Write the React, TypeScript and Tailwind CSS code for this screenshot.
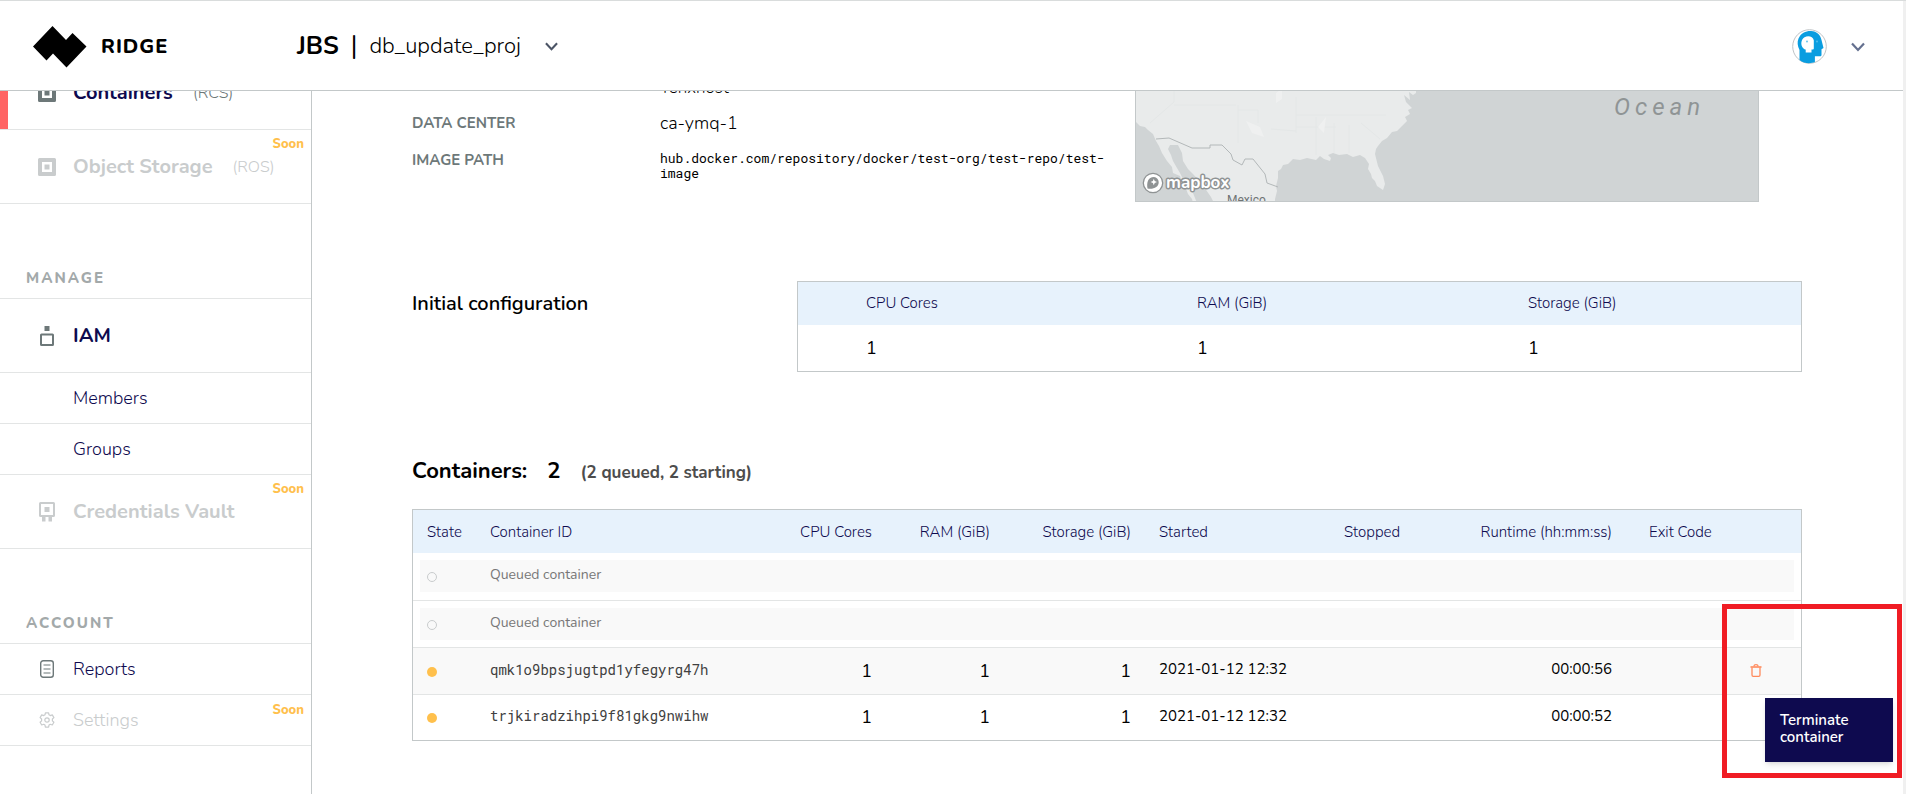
import type { ReactNode } from "react";

function RidgeLogo() {
  return (
    <svg width="54" height="42" viewBox="0 0 54 42" aria-hidden="true">
      <path d="M0 20.500 19.500 0 33 14 39.500 7 53.500 20.500 33.500 41.500 20 27.500 13.500 34.500Z" fill="#000" />
    </svg>
  );
}

function Chevron({ size }: { size: number }) {
  return (
    <svg width={size} height={size} viewBox="0 0 14 14" fill="none" stroke="currentColor" strokeWidth="2.200" aria-hidden="true">
      <path d="M1 3.500 7 10 13 3.500" />
    </svg>
  );
}

function Avatar() {
  return (
    <svg width="35" height="35" viewBox="0 0 35 35" aria-hidden="true">
      <circle cx="17.500" cy="17.500" r="16.800" fill="#fff" stroke="#bfc3c6" />
      <path d="M7.500 31V21C5.500 17 5 13 6.500 9.500 9 4 14 1.800 19 2c6 .3 9.500 4 10.500 9l2 8-2 1.200v5.500c0 1-.6 1.600-1.600 1.600h-5V33c-4 1.800-11 1.800-15.400-2Z" fill="#0a9de0" />
      <path d="M11 19c-2.500-3-2.300-8.500 1.500-10.800 3.500-2 8.500-1 9.300 3v8c0 1-.5 1.300-1.300 1.300h-1V23.500h-5.800V20.500c-1 0-2-.6-2.700-1.500Z" fill="#fff" />
      <circle cx="15" cy="12.500" r="0.900" fill="#5bbfec" />
      <circle cx="25" cy="12.500" r="0.900" fill="#5bbfec" />
    </svg>
  );
}

function ContainerIcon() {
  return (
    <svg width="18" height="18" viewBox="0 0 18 18" aria-hidden="true">
      <path fillRule="evenodd" fill="currentColor" d="M1.500 0h15A1.500 1.500 0 0 1 18 1.500v15a1.500 1.500 0 0 1-1.500 1.500h-15A1.500 1.500 0 0 1 0 16.500v-15A1.500 1.500 0 0 1 1.500 0ZM4 4v10h10V4Z" />
      <path fill="currentColor" d="M6.500 6.500h5v5h-5z" />
    </svg>
  );
}

function IamIcon() {
  return (
    <svg width="14" height="20" viewBox="0 0 14 20" aria-hidden="true">
      <path d="M4.500 0h5v5h-5z" fill="currentColor" />
      <rect x="1" y="8.500" width="12" height="10.500" rx="0.500" fill="none" stroke="currentColor" strokeWidth="2" />
    </svg>
  );
}

function VaultIcon() {
  return (
    <svg width="16" height="20" viewBox="0 0 16 20" aria-hidden="true">
      <rect x="1" y="1" width="14" height="13" rx="0.500" fill="none" stroke="currentColor" strokeWidth="2" />
      <path fill="currentColor" d="M5.500 5h5v5h-5zM3 15h3.500v4.500H3zM9.500 15H13v4.500H9.500z" />
    </svg>
  );
}

function ReportIcon() {
  return (
    <svg width="14" height="18" viewBox="0 0 14 18" fill="none" stroke="currentColor" aria-hidden="true">
      <rect x="0.700" y="0.700" width="12.600" height="16.600" rx="2.500" strokeWidth="1.400" />
      <path d="M3.500 5h7M3.500 9h7M3.500 13h7" strokeWidth="1.200" />
    </svg>
  );
}

function GearIcon() {
  return (
    <svg width="16" height="16" viewBox="0 0 16 16" fill="none" stroke="currentColor" strokeWidth="1.200" strokeLinejoin="round" aria-hidden="true">
      <circle cx="8" cy="8" r="2.200" />
      <path d="M6.400.8h3.200l.4 2 1.300.8 2-.7 1.600 2.700-1.500 1.400v1.900l1.500 1.400-1.600 2.700-2-.7-1.300.8-.4 2H6.400l-.4-2-1.300-.8-2 .7-1.600-2.700 1.500-1.400V7L1.100 5.600l1.600-2.700 2 .7L6 2.800Z" />
    </svg>
  );
}

function TrashIcon() {
  return (
    <svg width="12" height="13" viewBox="0 0 12 13" fill="none" stroke="currentColor" aria-hidden="true">
      <path d="M2 3.500v7.500c0 .8.400 1.300 1.200 1.300h5.600c.8 0 1.200-.5 1.200-1.300V3.500" strokeWidth="1.300" />
      <path d="M.5 3h11" strokeWidth="1.600" />
      <path d="M3.800 2.400C4 1.200 4.800.7 6 .7s2 .5 2.200 1.700" strokeWidth="1.300" />
    </svg>
  );
}

function MapboxMark() {
  return (
    <svg width="22" height="22" viewBox="0 0 22 22" aria-hidden="true">
      <circle cx="11" cy="11" r="9.700" fill="#fff" stroke="#8f9394" strokeWidth="1.300" />
      <path d="M5.500 16.500c-1-6 .5-11.500 6.500-11.500a5 5 0 0 1 4.700 5.200c0 5-5.200 7.300-11.200 6.300Z" fill="#8f9394" />
      <path d="m11.800 6.800.9 2.300 2.300.9-2.300.9-.9 2.300-.9-2.300-2.300-.9 2.300-.9Z" fill="#fff" />
    </svg>
  );
}

type NavItemProps = {
  icon?: ReactNode;
  label: string;
  suffix?: string;
  soon?: boolean;
  tall?: boolean;
  active?: boolean;
};

function NavItem({ icon, label, suffix, soon, tall, active }: NavItemProps) {
  return (
    <li>
      <a
        href="#"
        className={`relative flex items-center border-b border-[#e3e5e5] ${tall ? "h-[74px] text-xl" : "h-[51px] text-lg"} ${soon ? "text-[#c9cccd]" : "text-[#0e0a4f]"}`}
      >
        {active && <span className="absolute inset-y-0 left-0 w-2 bg-[#ff6464]" />}
        <span className={`flex w-[73px] justify-center pl-5 ${soon ? "" : "text-[#6d7879]"}`}>{icon}</span>
        <span className={tall ? "font-bold" : "font-light"}>{label}</span>
        {suffix && <span className={`ml-5 text-base font-light ${soon ? "" : "text-[#6d7879]"}`}>{suffix}</span>}
        {soon && <span className="absolute top-[5px] right-[7px] text-[13px] font-extrabold text-[#ffc04c]">Soon</span>}
      </a>
    </li>
  );
}

function NavTitle({ children }: { children: ReactNode }) {
  return (
    <h2 className="flex h-[95px] items-end border-b border-[#e3e5e5] pb-2 pl-[26px] text-[15px] leading-6 font-extrabold tracking-[2px] text-[#a3a9aa]">
      {children}
    </h2>
  );
}

function Sidebar() {
  return (
    <nav className="w-[312px] shrink-0 overflow-hidden border-r border-[#c3c8c9]">
      <div className="-mt-[35px]">
        <ul>
          <NavItem icon={<ContainerIcon />} label="Containers" suffix="(RCS)" tall active />
          <NavItem icon={<ContainerIcon />} label="Object Storage" suffix="(ROS)" tall soon />
        </ul>
        <NavTitle>MANAGE</NavTitle>
        <ul>
          <NavItem icon={<IamIcon />} label="IAM" tall />
          <NavItem label="Members" />
          <NavItem label="Groups" />
          <NavItem icon={<VaultIcon />} label="Credentials Vault" tall soon />
        </ul>
        <NavTitle>ACCOUNT</NavTitle>
        <ul>
          <NavItem icon={<ReportIcon />} label="Reports" />
          <NavItem icon={<GearIcon />} label="Settings" soon />
        </ul>
      </div>
    </nav>
  );
}

function MapPanel() {
  return (
    <div className="relative h-[146px] w-[624px] shrink-0 overflow-hidden border border-[#c3c8c9] bg-[#d0d4d5]">
      <svg viewBox="0 0 624 146" width="624" height="146" className="block max-w-none" role="img" aria-label="Map of North America">
        <path
          fill="#e9ebeb"
          d="M0 0H280V36L277 38 273 35 274 43 268 38 270 45 276 51 272 53 274 57 269 60 271 64 266 69 261 74 256 75 251 81 246 84 242 89 240 92 239 97 242 109 247 119 249 127 247 133 241 129 239 124 236 121 235 117 232 112 233 107 229 101 224 98 217 100 211 97 203 98 197 96 192 98 195 101 194 104 188 102 184 99 180 103 171 101 164 103 157 102 152 107 147 108 145 112 142 114 142 121 140 129 141 134 139 142V146H78L75 140 66 127 57 117 52 112 47 104 46 96 42 88 34 88 32 92 35 98 37 104 41 111 44 116 47 122 52 129 57 136 61 146H57L56 142 52 137 49 129 46 126 44 119 37 116 36 110 31 104 26 96 23 89 20 84 17 77 12 73 9 70 4 69 0 65Z"
        />
        <path
          fill="none"
          stroke="#e4e7e7"
          d="M38 20V45L14 66M38 48H100M102 48V86M102 53H122V66M160 40V76M160 58H250M180 60V98M198 66V96M213 68V96M160 70H200M135 72 160 74M225 66 244 82"
        />
        <path fill="#eff0f0" d="M110 64l14 6 4 10-12-4ZM140 36l6-4v10l-6 4ZM182 70l8-10-2 16Z" />
        <path
          fill="none"
          stroke="#b3b8b9"
          d="M20 82 33 81 56 91H74V88H86L95 97 97 103 106 108 109 102H117L129 117 131 126 142 130"
        />
      </svg>
      <span className="absolute top-[20px] left-[104px] text-[12px] leading-[18px] font-bold text-white">United States</span>
      <span className="absolute top-[34px] left-[478px] font-['Roboto',sans-serif] text-[24px] leading-8 font-normal tracking-[5px] text-[#8f9495] italic">Ocean</span>
      <span className="absolute top-[135px] left-[91px] font-['Roboto',sans-serif] text-[12px] leading-4 text-[#6f7475]">Mexico</span>
      <a href="#" className="absolute bottom-[7px] left-[6px] flex items-center gap-[2px]">
        <MapboxMark />
        <span className="text-[17px] leading-5 font-bold text-white [-webkit-text-stroke:3px_#8f9394] [paint-order:stroke_fill]">mapbox</span>
      </a>
    </div>
  );
}

function Details() {
  return (
    <section className="flex">
      <dl className="grid flex-1 auto-rows-min grid-cols-[248px_1fr] gap-y-[13px] pt-[18px] text-[15px] leading-6 font-bold text-[#6d7879]">
        <dd className="col-start-2 -mb-[2px] pt-[2px] text-[17px] font-light text-black">Tenxhost</dd>
        <dt>DATA CENTER</dt>
        <dd className="text-[18px] font-light text-black">ca-ymq-1</dd>
        <dt>IMAGE PATH</dt>
        <dd className="pt-[3px] font-['Roboto_Mono','Liberation_Mono',monospace] text-[13px] leading-[15px] font-normal whitespace-nowrap text-black">
          hub.docker.com/repository/docker/test-org/test-repo/test-
          <br />
          image
        </dd>
      </dl>
      <MapPanel />
      <div className="w-[43px] shrink-0" />
    </section>
  );
}

const headText = "bg-[#e7f2fc] text-[15px] leading-5 text-[#0e0a4f]";

function InitialConfiguration() {
  return (
    <section className="mt-[79px] flex items-start">
      <h2 className="w-[385px] shrink-0 pt-[7px] text-[20px] leading-8 font-semibold">Initial configuration</h2>
      <div className="flex-1 border border-[#c3c8c9]">
        <table className="w-full table-fixed text-left">
          <thead>
            <tr className={`h-[43px] ${headText}`}>
              <th className="w-[33%] pb-[2px] pl-[68px] font-light">CPU Cores</th>
              <th className="w-[33%] pb-[2px] pl-[68px] font-light">RAM (GiB)</th>
              <th className="pb-[2px] pl-[68px] font-light">Storage (GiB)</th>
            </tr>
          </thead>
          <tbody>
            <tr className="h-[46px] text-lg">
              <td className="pl-[68px]">1</td>
              <td className="pl-[68px]">1</td>
              <td className="pl-[68px]">1</td>
            </tr>
          </tbody>
        </table>
      </div>
    </section>
  );
}

const running = [
  { id: "qmk1o9bpsjugtpd1yfegyrg47h", started: "2021-01-12 12:32", runtime: "00:00:56", selected: true },
  { id: "trjkiradzihpi9f81gkg9nwihw", started: "2021-01-12 12:32", runtime: "00:00:52", selected: false },
];

function TerminateAction() {
  return (
    <div className="relative flex w-[52px] justify-center">
      <button type="button" aria-label="Terminate container" className="cursor-pointer text-[#ff8a5c]">
        <TrashIcon />
      </button>
      <div className="absolute -top-[60px] -left-2 z-10 h-[174px] w-[180px] border-[5px] border-[#f01c24]" />
      <div role="tooltip" className="absolute top-[34px] left-[35px] z-20 h-16 w-32 bg-[#0e0a4f] px-[15px] pt-[14px] text-[15px] leading-[17px] font-semibold text-white shadow-md">
        Terminate container
      </div>
    </div>
  );
}

function ContainersTable() {
  return (
    <section className="mt-[83px]">
      <h2 className="flex items-baseline text-[22px] leading-8 font-bold">
        Containers: <span className="ml-5">2</span>
        <span className="ml-5 text-[17px] text-[#4d4d4d]">(2 queued, 2 starting)</span>
      </h2>
      <div className="mt-5 border border-[#c3c8c9]">
        <table className="w-full table-fixed border-collapse text-left">
          <thead>
            <tr className={`h-[43px] ${headText}`}>
              <th className="w-16 pl-[14px] font-light">State</th>
              <th className="pl-[13px] font-light">Container ID</th>
              <th className="w-[100px] pr-[14px] text-right font-light">CPU Cores</th>
              <th className="w-[118px] pr-[14px] text-right font-light">RAM (GiB)</th>
              <th className="w-[141px] pr-[14px] text-right font-light">Storage (GiB)</th>
              <th className="w-[185px] pl-[14px] font-light">Started</th>
              <th className="w-[131px] pl-[14px] font-light">Stopped</th>
              <th className="w-[174px] pr-[23px] text-right font-light">Runtime (hh:mm:ss)</th>
              <th className="w-[95px] pl-[14px] font-light">Exit Code</th>
              <th className="w-[71px]" aria-label="Actions" />
            </tr>
          </thead>
          <tbody>
            {[1, 2].map((n) => (
              <tr key={n} className="h-[47px] border-b border-[#e3e5e5]">
                <td colSpan={10} className="px-[7px]">
                  <div className="flex h-8 items-center bg-[#f9f9f9] pb-[2px] pl-[7px] text-sm text-[#777]">
                    <span className="mt-1 mr-[53px] size-[10px] rounded-full border border-[#c9cccd]" />
                    Queued container
                  </div>
                </td>
              </tr>
            ))}
            {running.map((row) => (
              <tr key={row.id} className={`h-[47px] text-[15px] not-last:border-b not-last:border-[#e3e5e5] last:h-[46px] ${row.selected ? "bg-[#f9f9f9]" : ""}`}>
                <td className="pl-[14px]">
                  <span className="mt-[2px] block size-[10px] rounded-full bg-[#ffc04c]" />
                </td>
                <td className="pb-[2px] pl-[13px] font-['Roboto_Mono','Liberation_Mono',monospace] text-sm text-[#404040]">{row.id}</td>
                <td className="pr-[14px] text-right text-lg">1</td>
                <td className="pr-[14px] text-right text-lg">1</td>
                <td className="pr-[14px] text-right text-lg">1</td>
                <td className="pb-[2px] pl-[14px]">{row.started}</td>
                <td />
                <td className="pr-[23px] pb-[2px] text-right">{row.runtime}</td>
                <td />
                <td>{row.selected && <TerminateAction />}</td>
              </tr>
            ))}
          </tbody>
        </table>
      </div>
    </section>
  );
}

export default function App() {
  return (
    <div className="flex h-screen overflow-hidden bg-white font-['Nunito','Open_Sans',sans-serif] text-black">
      <div className="flex min-w-0 flex-1 flex-col">
        <header className="flex h-[91px] shrink-0 items-center border-b border-[#c3c8c9] pt-[3px] pr-[38px] pl-[33px] shadow-[inset_0_2px_0_-1px_#d9dcdc]">
          <a href="#" className="flex w-[264px] items-center gap-[14px]">
            <RidgeLogo />
            <span className="text-[20px] font-extrabold tracking-[1px]">RIDGE</span>
          </a>
          <button type="button" className="flex cursor-pointer items-center">
            <span className="text-[25px] font-bold">JBS</span>
            <span className="mx-3 text-[25px]">|</span>
            <span className="text-[22px] font-light">db_update_proj</span>
            <span className="ml-6 text-[#4c5566]">
              <Chevron size={13} />
            </span>
          </button>
          <button type="button" aria-label="Account" className="ml-auto flex cursor-pointer items-center gap-6 text-[#64708f]">
            <Avatar />
            <Chevron size={14} />
          </button>
        </header>
        <div className="flex min-h-0 flex-1">
          <Sidebar />
          <main className="min-w-0 flex-1 overflow-hidden pr-[101px] pl-[100px]">
            <div className="-mt-[35px]">
              <Details />
              <InitialConfiguration />
              <ContainersTable />
            </div>
          </main>
        </div>
      </div>
      <div className="w-[3px] shrink-0 border-t border-[#d9dcdc] bg-[#f0f0f0]" />
    </div>
  );
}
